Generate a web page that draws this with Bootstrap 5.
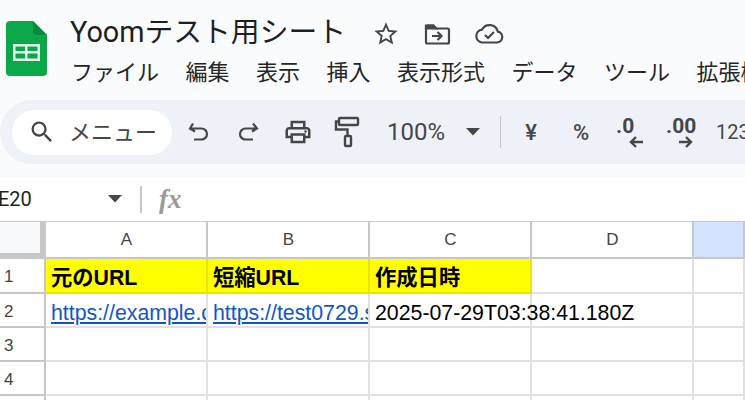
<!DOCTYPE html>
<html lang="ja">
<head>
<meta charset="UTF-8" />
<title>Yoomテスト用シート</title>
<link href="https://cdn.jsdelivr.net/npm/bootstrap@5.3.0/dist/css/bootstrap.min.css" rel="stylesheet">
<style>
  html, body { height: 400px; overflow: hidden; }
  body { background: #fff; font-family: Roboto, "Noto Sans CJK JP", sans-serif; color: #1f1f1f; }
  .app-head { background: #f9fbfd; height: 177px; }
  .title-row { height: 100px; overflow: hidden; }
  .doc-logo { width: 41px; height: 55px; margin: 21px 0 0 6px; }
  .title-col { margin-left: 23px; }
  .doc-title { font-size: 28.8px; line-height: 36px; margin: 14px 0 0 0; color: #1f1f1f; white-space: nowrap; }
  .title-icons { gap: 23px; margin: 17px 0 0 26px; }
  .menu-row { font-size: 22px; line-height: 30px; gap: 26.500px; margin: 8px 0 0 1px; white-space: nowrap; color: #262626; }
  .tool-strip { height: 64px; background: #eef2f8; border-radius: 32px 0 0 32px; padding-left: 12px; color: #444746; white-space: nowrap; overflow: hidden; }
  .tool-strip > * { flex: none; }
  .menu-search { width: 160px; height: 45px; background: #fff; border-radius: 23px; padding-left: 16px; font-size: 22px; gap: 13px; }
  .tool-ico { display: block; flex: none; }
  .ti-undo { margin-left: 15px; }
  .ti-redo { margin-left: 21px; }
  .ti-print { margin-left: 23px; }
  .ti-roller { margin-left: 21px; }
  .zoom-val { font-size: 24px; margin-left: 27px; }
  .ti-caret { margin-left: 21px; }
  .strip-sep { width: 1px; height: 32px; background: #c7c7c7; margin-left: 20px; }
  .fmt-txt { font-size: 22px; font-weight: 500; width: 30px; text-align: center; }
  .fmt-yen { margin-left: 15px; }
  .fmt-pct { margin-left: 20px; }
  .dec-btn { position: relative; width: 30px; height: 34px; margin-left: 20px; font-size: 21px; font-weight: 700; line-height: 22px; letter-spacing: 0; }
  .dec-btn svg { position: absolute; top: 21px; left: 13px; }
  .dec-more { margin-left: 20px; }
  .dec-more svg { left: 13px; }
  .fmt-num { font-size: 20px; margin-left: 20px; }
  .name-row { height: 44px; background: #fff; }
  .name-box { width: 124px; font-size: 20px; margin-left: -2px; color: #1f1f1f; }
  .name-sep { width: 2px; height: 27px; background: #c7c7c7; margin: 0 17px 0 18px; }
  .fx-mark { font-family: "Liberation Serif", serif; font-style: italic; font-weight: 700; font-size: 27px; color: #9a9a9a; line-height: 1; }
  .sheet-grid { display: grid; grid-template-columns: 46px repeat(4, 162px) 1fr; grid-template-rows: 37px 35px 34px 34px 34px 4px; border-top: 1px solid #c7c7c7; font-family: "Liberation Sans", Arial, sans-serif; }
  .gc { border-right: 2px solid #e1e1e1; border-bottom: 2px solid #e1e1e1; font-size: 21.3px; color: #000; padding: 3px 0 0 5px; line-height: 32px; white-space: nowrap; overflow: hidden; min-width: 0; }
  .gc-open { overflow: visible; }
  .gc-tail { border-bottom: 0; padding: 0; }
  .col-head { border-right-color: #c7c7c7; border-bottom-color: #c7c7c7; font-size: 17px; color: #444; text-align: center; line-height: 36px; padding: 0 0 0 1px; }
  .col-on { background: #d3e3fd; }
  .corner-cell { background: #f8f9fa; border-right: 6px solid #c7c7c7; border-bottom: 6px solid #c7c7c7; padding: 0; }
  .row-head { border-right-color: #c7c7c7; border-bottom-color: #c7c7c7; font-size: 17px; color: #444; padding: 3px 0 0 4px; line-height: 30px; }
  .head-cell { background: #ff0; font-weight: 700; font-family: "Liberation Sans", "Noto Sans CJK JP", sans-serif; border-right-color: #e6e600; border-bottom-color: #e6e600; }
  .gc a { color: #1155cc; text-decoration: underline; display: block; }
</style>
</head>
<body>

<div class="app-head">
  <div class="title-row d-flex">
    <svg class="doc-logo flex-shrink-0" viewBox="0 0 41 55">
      <path d="M4 0H27L41 14V51a4 4 0 0 1-4 4H4a4 4 0 0 1-4-4V4a4 4 0 0 1 4-4z" fill="#0ba84a"/>
      <path d="M27 0L41 14H31a4 4 0 0 1-4-4z" fill="#0a8a3d"/>
      <path d="M7 23H34V40H7zM9.500 25.500V30H19V25.500zM21.500 25.500V30H31.500V25.500zM9.500 32.500V37.500H19V32.500zM21.500 32.500V37.500H31.500V32.500z" fill="#e8f5ec" fill-rule="evenodd"/>
    </svg>
    <div class="title-col">
      <div class="d-flex align-items-center">
        <div class="doc-title">Yoomテスト用シート</div>
        <div class="title-icons d-flex align-items-center">
          <svg class="tool-ico" width="28" height="28" viewBox="0 0 24 24" fill="#444746"><path d="M22 9.240l-7.190-.62L12 2 9.190 8.630 2 9.240l5.460 4.730L5.820 21 12 17.270 18.180 21l-1.630-7.030L22 9.240zM12 15.400l-3.760 2.270 1-4.280-3.320-2.880 4.380-.38L12 6.100l1.710 4.040 4.380.38-3.320 2.880 1 4.280L12 15.400z"/></svg>
          <svg class="tool-ico" width="28" height="24" viewBox="0 0 28 24" fill="none" stroke="#444746" stroke-width="2.200"><path d="M3 4.500V20a1.500 1.500 0 0 0 1.500 1.500h20A1.500 1.500 0 0 0 26 20V8a1.500 1.500 0 0 0-1.500-1.500H13L10.500 3.500H4.500A1.500 1.500 0 0 0 3 4.500z"/><path d="M3 3.500h7.500L13 6.500H3z" fill="#444746"/><path d="M9 14h9M14.500 10l4 4-4 4"/></svg>
          <svg class="tool-ico" width="30" height="24" viewBox="0 0 30 24" fill="none" stroke="#444746" stroke-width="2.200"><path d="M8 20.500h15a5.500 5.500 0 0 0 .8-10.900A8.500 8.500 0 0 0 8 7.600a6.500 6.500 0 0 0 0 12.900z"/><path d="M11 13l3 3 6-6"/></svg>
        </div>
      </div>
      <div class="menu-row d-flex">
        <span>ファイル</span><span>編集</span><span>表示</span><span>挿入</span><span>表示形式</span><span>データ</span><span>ツール</span><span>拡張機能</span>
      </div>
    </div>
  </div>
  <div class="tool-strip d-flex align-items-center">
    <div class="menu-search d-flex align-items-center flex-shrink-0">
      <svg class="tool-ico" width="28" height="28" viewBox="0 0 24 24" fill="#444746"><path d="M15.500 14h-.79l-.28-.27A6.471 6.471 0 0 0 16 9.500 6.500 6.500 0 1 0 9.500 16c1.610 0 3.090-.59 4.230-1.570l.27.28v.79l5 4.990L20.490 19l-4.990-5zm-6 0C7.010 14 5 11.990 5 9.500S7.010 5 9.500 5 14 7.010 14 9.500 11.990 14 9.500 14z"/></svg>
      <span>メニュー</span>
    </div>
    <svg class="tool-ico ti-undo" width="26" height="26" viewBox="0 0 26 26" fill="none" stroke="#444746" stroke-width="2.200"><path d="M6 4.500L3 9.500l5 3M3.500 9.500h11a5.500 5.500 0 0 1 0 11H7"/></svg>
    <svg class="tool-ico ti-redo" width="26" height="26" viewBox="0 0 26 26" fill="none" stroke="#444746" stroke-width="2.200"><path d="M19 4.500l4 5-5 3M22.500 9.500h-11a5.500 5.500 0 0 0 0 11H19"/></svg>
    <svg class="tool-ico ti-print" width="30" height="30" viewBox="0 0 24 24" fill="#444746"><path d="M19 8h-1V3H6v5H5c-1.660 0-3 1.340-3 3v6h4v4h12v-4h4v-6c0-1.660-1.340-3-3-3zM8 5h8v3H8V5zm8 12v2H8v-4h8v2zm2-2v-2H6v2H4v-4c0-.55.45-1 1-1h14c.55 0 1 .45 1 1v4h-2z"/><circle cx="18" cy="11.500" r="1"/></svg>
    <svg class="tool-ico ti-roller" width="26" height="32" viewBox="0 0 26 32" fill="none" stroke="#444746" stroke-width="2.400"><rect x="5" y="2" width="19" height="7" rx="1"/><path d="M5 5.500H2v8h11.500V20"/><rect x="11" y="20" width="6" height="10" rx="1"/></svg>
    <span class="zoom-val">100%</span>
    <svg class="tool-ico ti-caret" width="14" height="8" viewBox="0 0 14 8" fill="#444746"><path d="M0 0h14L7 7.500z"/></svg>
    <div class="strip-sep"></div>
    <span class="fmt-txt fmt-yen">¥</span>
    <span class="fmt-txt fmt-pct">%</span>
    <div class="dec-btn">.0<svg width="14" height="12" viewBox="0 0 14 12" fill="none" stroke="#444746" stroke-width="2.400"><path d="M14 6H2M7 1L2 6l5 5"/></svg></div>
    <div class="dec-btn dec-more">.00<svg width="14" height="12" viewBox="0 0 14 12" fill="none" stroke="#444746" stroke-width="2.400"><path d="M0 6h12M7 1l5 5-5 5"/></svg></div>
    <span class="fmt-num">123</span>
  </div>
</div>

<div class="name-row d-flex align-items-center">
  <div class="name-box d-flex align-items-center justify-content-between">
    <span>E20</span>
    <svg width="14" height="8" viewBox="0 0 14 8" fill="#444746"><path d="M0 0h14L7 7.500z"/></svg>
  </div>
  <div class="name-sep"></div>
  <span class="fx-mark">fx</span>
</div>

<div class="sheet-grid">
  <div class="gc corner-cell"></div>
  <div class="gc col-head">A</div><div class="gc col-head">B</div><div class="gc col-head">C</div><div class="gc col-head">D</div><div class="gc col-head col-on"></div>

  <div class="gc row-head">1</div>
  <div class="gc head-cell">元のURL</div><div class="gc head-cell">短縮URL</div><div class="gc head-cell">作成日時</div><div class="gc"></div><div class="gc"></div>

  <div class="gc row-head">2</div>
  <div class="gc"><a href="#">https://example.com/</a></div>
  <div class="gc"><a href="#">https://test0729.short.gy/</a></div>
  <div class="gc gc-open">2025-07-29T03:38:41.180Z</div><div class="gc"></div><div class="gc"></div>

  <div class="gc row-head">3</div><div class="gc"></div><div class="gc"></div><div class="gc"></div><div class="gc"></div><div class="gc"></div>
  <div class="gc row-head">4</div><div class="gc"></div><div class="gc"></div><div class="gc"></div><div class="gc"></div><div class="gc"></div>
  <div class="gc gc-tail row-head"></div><div class="gc gc-tail"></div><div class="gc gc-tail"></div><div class="gc gc-tail"></div><div class="gc gc-tail"></div><div class="gc gc-tail"></div>
</div>

<script src="https://cdn.jsdelivr.net/npm/bootstrap@5.3.0/dist/js/bootstrap.bundle.min.js"></script>
</body>
</html>
